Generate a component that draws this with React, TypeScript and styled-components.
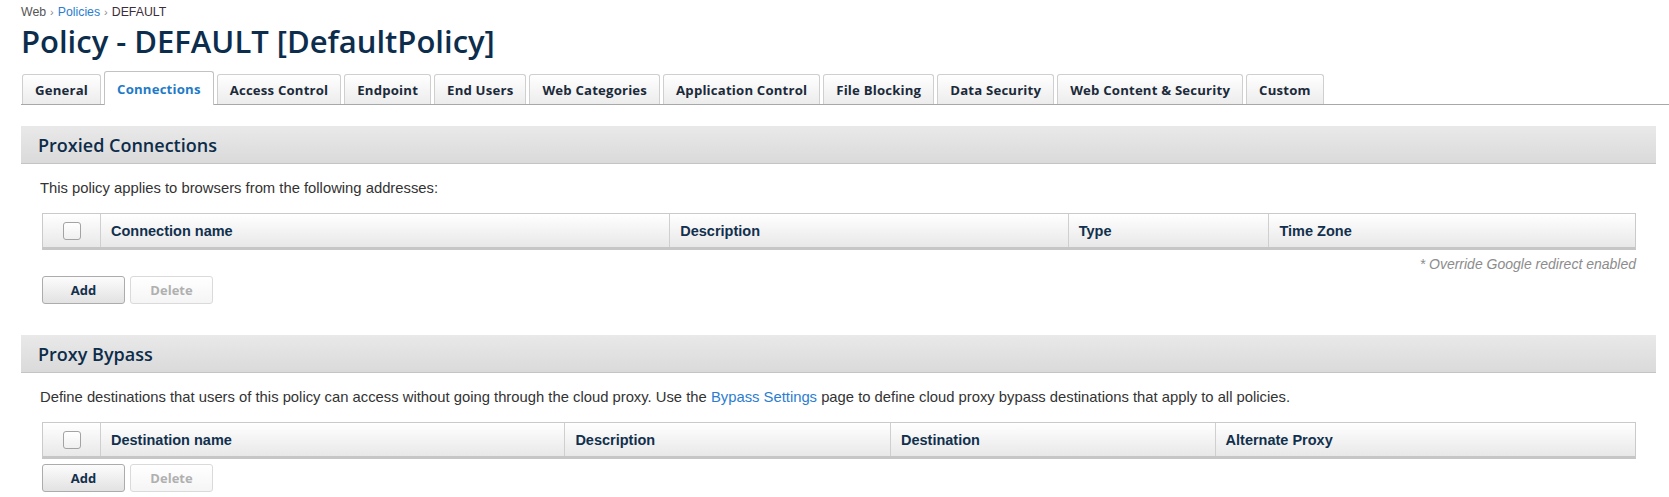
import React from "react";
import styled, { createGlobalStyle, css } from "styled-components";

const GlobalStyle = createGlobalStyle`
  html, body { margin: 0; padding: 0; background: #ffffff; }
  body { font-family: "Liberation Sans", Arial, sans-serif; color: #333333; }
  * { box-sizing: border-box; }
`;

const Page = styled.div`
  padding: 4px 13px 0 21px;
`;

const Breadcrumb = styled.nav`
  display: flex;
  align-items: center;
  gap: 4px;
  font-size: 12.3px;
  line-height: 16px;
  color: #555555;
`;

const Crumb = styled.span<{ $kind?: "link" | "current" }>`
  color: ${(p) => (p.$kind === "link" ? "#2a7dd1" : p.$kind === "current" ? "#3b2d3b" : "#555555")};
`;

const Sep = styled.span`
  color: #8a8a8a;
  font-size: 11px;
`;

const Title = styled.h1`
  margin: 2px 0 0;
  font-family: "Open Sans", "Noto Sans", sans-serif;
  font-weight: 600;
  font-size: 31px;
  line-height: 38px;
  color: #0c2d4c;
`;

const TabBar = styled.div`
  display: flex;
  align-items: flex-end;
  gap: 3px;
  height: 34px;
  margin-top: 11px;
  margin-right: -13px;
  padding-left: 1px;
  border-bottom: 1px solid #a8a8a8;
`;

const Tab = styled.div<{ $active?: boolean }>`
  display: flex;
  align-items: center;
  height: 30px;
  padding: 0 12px;
  border: 1px solid #cfcfcf;
  border-bottom: none;
  border-radius: 3px 3px 0 0;
  background: linear-gradient(#ffffff, #ececec);
  font-family: "Open Sans", "Noto Sans", sans-serif;
  font-weight: 700;
  font-size: 13.2px;
  letter-spacing: 0.18px;
  color: #1b2a3a;
  white-space: nowrap;
  ${(p) =>
    p.$active &&
    css`
      height: 34px;
      margin-bottom: -1px;
      background: #ffffff;
      border-color: #c2c2c2;
      color: #1f7bc8;
    `}
`;

const Section = styled.section<{ $gap: number }>`
  margin-top: ${(p) => p.$gap}px;
`;

const SectionHeader = styled.h2`
  margin: 0;
  height: 38px;
  display: flex;
  align-items: center;
  padding-left: 17px;
  background: linear-gradient(#e9e9e9, #dadada);
  border-bottom: 1px solid #c4c4c4;
  font-family: "Open Sans", "Noto Sans", sans-serif;
  font-weight: 600;
  font-size: 18px;
  color: #0d2c4a;
`;

const SectionBody = styled.div`
  padding: 15px 20px 0 19px;
`;

const Description = styled.p`
  margin: 0;
  font-size: 14.8px;
  line-height: 18px;
  color: #333333;
`;

const Link = styled.a`
  color: #2a7dd1;
  text-decoration: none;
`;

const Table = styled.div<{ $cols: string }>`
  margin: 16px 0 0 2px;
  display: grid;
  grid-template-columns: ${(p) => p.$cols};
  height: 37px;
  border: 1px solid #cacaca;
  border-bottom: 3px solid #c6c6c6;
  background: linear-gradient(#ffffff, #e8e8e8);
`;

const HeadCell = styled.div<{ $center?: boolean }>`
  display: flex;
  align-items: center;
  justify-content: ${(p) => (p.$center ? "center" : "flex-start")};
  padding-left: ${(p) => (p.$center ? 0 : 10)}px;
  border-left: 1px solid #cfcfcf;
  font-weight: 700;
  font-size: 14.5px;
  color: #11304d;
  &:first-child { border-left: none; }
`;

const CheckBox = styled.span`
  display: block;
  width: 18px;
  height: 18px;
  border: 1px solid #a3a3a3;
  border-radius: 3px;
  background: linear-gradient(#ffffff, #f0f0f0);
`;

const Note = styled.div`
  margin-top: 5px;
  line-height: 18px;
  text-align: right;
  font-style: italic;
  font-size: 14px;
  color: #8c8c8c;
`;

const ButtonRow = styled.div<{ $top: number }>`
  display: flex;
  gap: 5px;
  margin: ${(p) => p.$top}px 0 0 2px;
`;

const Button = styled.button<{ $disabled?: boolean }>`
  width: 83px;
  height: 28px;
  border: 1px solid #acacac;
  border-radius: 3px;
  background: linear-gradient(#fcfcfc, #e2e2e2);
  font-family: "Open Sans", "Noto Sans", sans-serif;
  font-weight: 700;
  font-size: 13px;
  color: #14304c;
  padding: 0;
  ${(p) =>
    p.$disabled &&
    css`
      border-color: #dadada;
      background: linear-gradient(#ffffff, #f5f5f5);
      color: #b0b0b0;
    `}
`;

const tabs = [
  "General",
  "Connections",
  "Access Control",
  "Endpoint",
  "End Users",
  "Web Categories",
  "Application Control",
  "File Blocking",
  "Data Security",
  "Web Content & Security",
  "Custom",
];

function HeaderTable({ cols, names }: { cols: string; names: string[] }) {
  return (
    <Table $cols={cols}>
      <HeadCell $center>
        <CheckBox />
      </HeadCell>
      {names.map((n) => (
        <HeadCell key={n}>{n}</HeadCell>
      ))}
    </Table>
  );
}

export default function App() {
  return (
    <>
      <GlobalStyle />
      <Page>
        <Breadcrumb>
          <Crumb>Web</Crumb>
          <Sep>›</Sep>
          <Crumb $kind="link">Policies</Crumb>
          <Sep>›</Sep>
          <Crumb $kind="current">DEFAULT</Crumb>
        </Breadcrumb>
        <Title>Policy - DEFAULT [DefaultPolicy]</Title>
        <TabBar>
          {tabs.map((t) => (
            <Tab key={t} $active={t === "Connections"}>
              {t}
            </Tab>
          ))}
        </TabBar>

        <Section $gap={21}>
          <SectionHeader>Proxied Connections</SectionHeader>
          <SectionBody>
            <Description>This policy applies to browsers from the following addresses:</Description>
            <HeaderTable
              cols="57px 570fr 399fr 201fr 367fr"
              names={["Connection name", "Description", "Type", "Time Zone"]}
            />
            <Note>* Override Google redirect enabled</Note>
            <ButtonRow $top={3}>
              <Button>Add</Button>
              <Button $disabled>Delete</Button>
            </ButtonRow>
          </SectionBody>
        </Section>

        <Section $gap={31}>
          <SectionHeader>Proxy Bypass</SectionHeader>
          <SectionBody>
            <Description>
              Define destinations that users of this policy can access without going through the cloud proxy. Use the{" "}
              <Link>Bypass Settings</Link> page to define cloud proxy bypass destinations that apply to all policies.
            </Description>
            <HeaderTable
              cols="57px 465fr 326fr 325fr 421fr"
              names={["Destination name", "Description", "Destination", "Alternate Proxy"]}
            />
            <ButtonRow $top={5}>
              <Button>Add</Button>
              <Button $disabled>Delete</Button>
            </ButtonRow>
          </SectionBody>
        </Section>
      </Page>
    </>
  );
}
